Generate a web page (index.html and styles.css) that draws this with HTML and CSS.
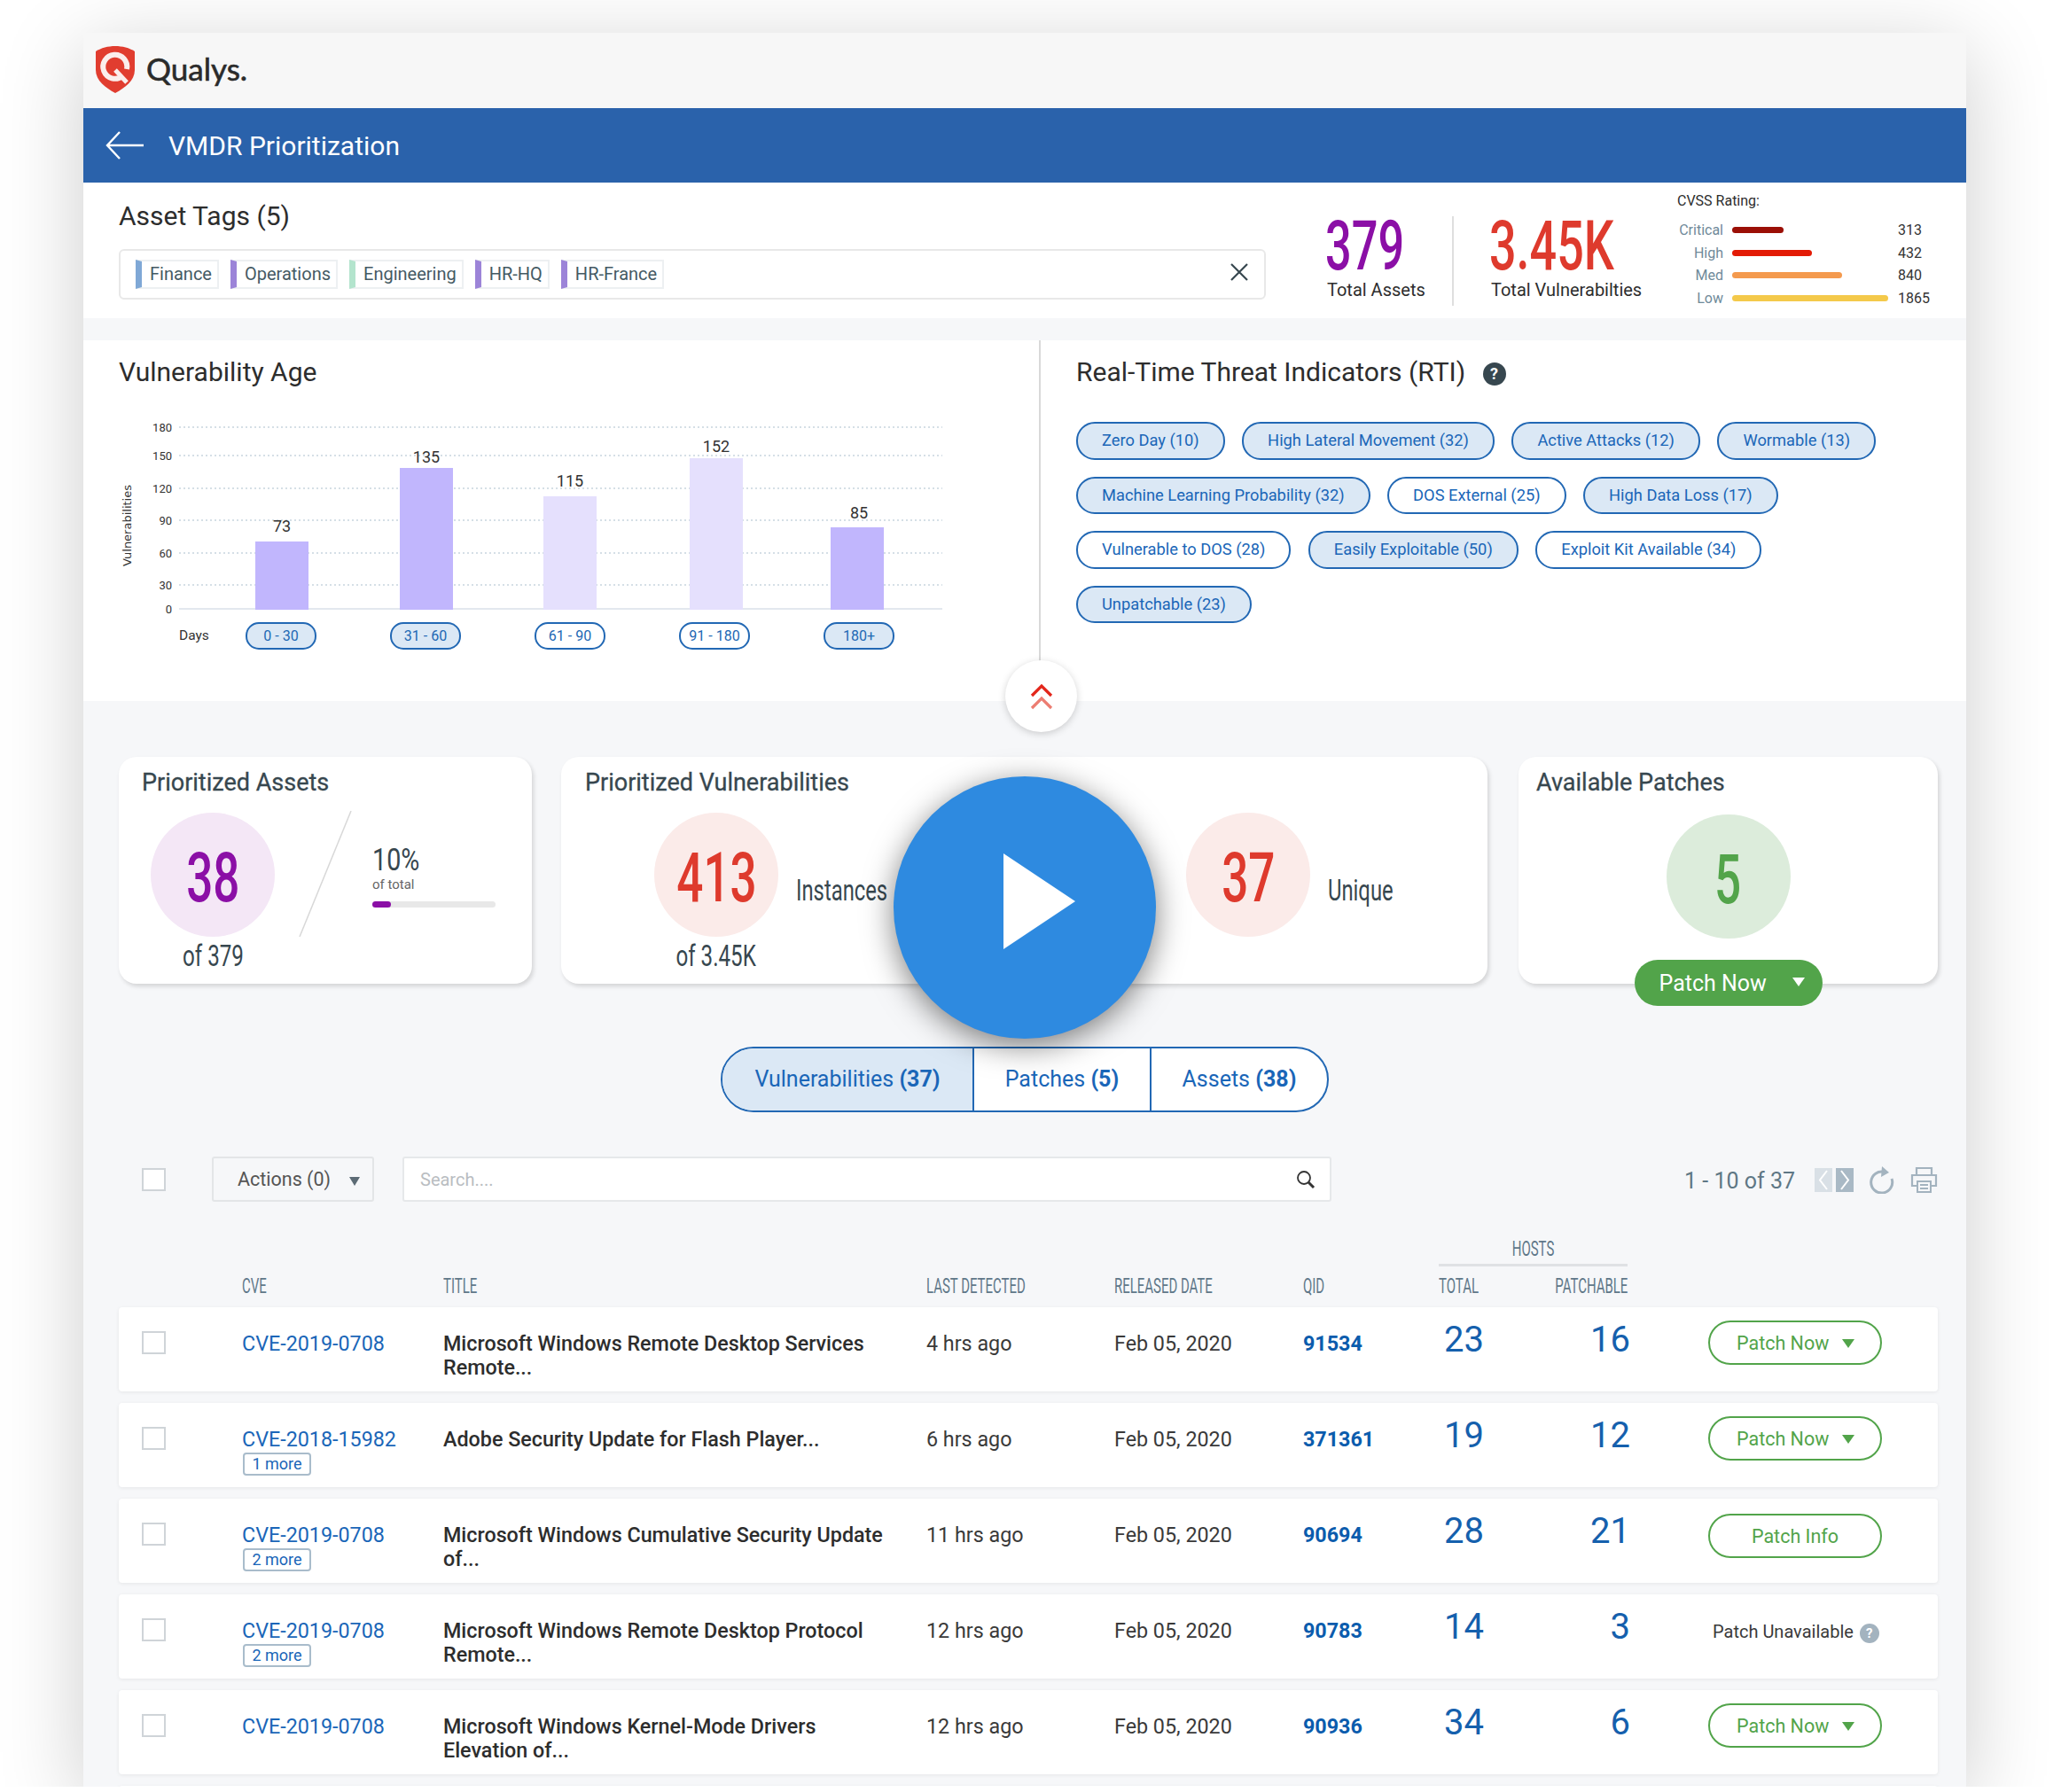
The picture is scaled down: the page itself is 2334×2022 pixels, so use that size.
FILE: index.html
```html
<!DOCTYPE html>
<html lang="en">
<head>
  <meta charset="UTF-8" />
  <title>VMDR Prioritization</title>
  <link rel="stylesheet" href="styles.css">
</head>
<body>
<div class="stage">
<div class="window">

  <div class="logo-bar">
    <svg class="logo" viewBox="0 0 44 53">
      <path d="M22 0C30 0 38 2 44 6V27C44 39 33 47 22 53C11 47 0 39 0 27V6C6 2 14 0 22 0Z" fill="#e13d2f"/>
      <path d="M30 34A13.500 13.500 0 1 1 35 26" fill="none" stroke="#fbeeec" stroke-width="6"/>
      <path d="M22 27L35 41" fill="none" stroke="#fbeeec" stroke-width="5"/>
    </svg>
    <span class="logo-text">Qualys.</span>
  </div>

  <div class="title-bar">
    <svg class="back-arrow" viewBox="0 0 44 32"><path d="M43 16H2M16 1L2 16L16 31" fill="none" stroke="#fff" stroke-width="2.4"/></svg>
    <span>VMDR Prioritization</span>
  </div>

  <section class="summary">
    <div class="tags-block">
      <h2 class="heading">Asset Tags (5)</h2>
      <div class="tag-box">
        <span class="tag tag-blue">Finance</span>
        <span class="tag tag-purple">Operations</span>
        <span class="tag tag-green">Engineering</span>
        <span class="tag tag-purple">HR-HQ</span>
        <span class="tag tag-purple">HR-France</span>
        <svg class="tag-clear" viewBox="0 0 20 20"><path d="M1 1L19 19M19 1L1 19" stroke="#37474f" stroke-width="2.2"/></svg>
      </div>
    </div>
    <div class="total total-assets">
      <div class="total-num purple"><span class="squeeze">379</span></div>
      <div class="total-label">Total Assets</div>
    </div>
    <div class="total total-vulns">
      <div class="total-num red"><span class="squeeze">3.45K</span></div>
      <div class="total-label">Total Vulnerabilties</div>
    </div>
    <div class="cvss">
      <div class="cvss-title">CVSS Rating:</div>
      <div class="cvss-rows">
        <span class="cvss-name">Critical</span><span class="cvss-track"><i class="cvss-bar" style="width:58px;background:#9b0f06"></i></span><span class="cvss-val">313</span>
        <span class="cvss-name">High</span><span class="cvss-track"><i class="cvss-bar" style="width:90px;background:#e31b06"></i></span><span class="cvss-val">432</span>
        <span class="cvss-name">Med</span><span class="cvss-track"><i class="cvss-bar" style="width:124px;background:#f49a4e"></i></span><span class="cvss-val">840</span>
        <span class="cvss-name">Low</span><span class="cvss-track"><i class="cvss-bar" style="width:176px;background:#f4c94a"></i></span><span class="cvss-val">1865</span>
      </div>
    </div>
  </section>

  <section class="insights">
    <div class="age-panel">
      <h2 class="heading">Vulnerability Age</h2>
      <svg class="age-chart" viewBox="94 470 1080 225">
        <g class="grid-lines">
          <path d="M202 482H1063M202 514H1063M202 551H1063M202 587H1063M202 624H1063M202 660H1063"/>
        </g>
        <path d="M202 687H1063" stroke="#e3e8ee" stroke-width="2"/>
        <g class="ticks">
          <text x="194" y="487">180</text><text x="194" y="519">150</text><text x="194" y="556">120</text>
          <text x="194" y="592">90</text><text x="194" y="629">60</text><text x="194" y="665">30</text><text x="194" y="692">0</text>
        </g>
        <text class="axis-title" transform="translate(148 593) rotate(-90)">Vulnerabilities</text>
        <rect x="288" y="611" width="60" height="77" fill="#c1b6fd"/>
        <rect x="451" y="528" width="60" height="160" fill="#c1b6fd"/>
        <rect x="613" y="560" width="60" height="128" fill="#e5e0fd"/>
        <rect x="778" y="517" width="60" height="171" fill="#e5e0fd"/>
        <rect x="937" y="595" width="60" height="93" fill="#c1b6fd"/>
        <g class="bar-labels">
          <text x="318" y="600">73</text><text x="481" y="522">135</text><text x="643" y="549">115</text>
          <text x="808" y="510">152</text><text x="969" y="585">85</text>
        </g>
      </svg>
      <div class="age-pills">
        <span class="days">Days</span>
        <span class="age-pill on">0 - 30</span>
        <span class="age-pill on">31 - 60</span>
        <span class="age-pill">61 - 90</span>
        <span class="age-pill">91 - 180</span>
        <span class="age-pill on">180+</span>
      </div>
    </div>
    <div class="rti-panel">
      <h2 class="heading">Real-Time Threat Indicators (RTI) <span class="help">?</span></h2>
      <div class="chips">
        <div class="chip-row">
          <span class="chip on">Zero Day (10)</span>
          <span class="chip on">High Lateral Movement (32)</span>
          <span class="chip on">Active Attacks (12)</span>
          <span class="chip on">Wormable (13)</span>
        </div>
        <div class="chip-row">
          <span class="chip on">Machine Learning Probability (32)</span>
          <span class="chip">DOS External (25)</span>
          <span class="chip on">High Data Loss (17)</span>
        </div>
        <div class="chip-row">
          <span class="chip">Vulnerable to DOS (28)</span>
          <span class="chip on">Easily Exploitable (50)</span>
          <span class="chip">Exploit Kit Available (34)</span>
        </div>
        <div class="chip-row">
          <span class="chip on">Unpatchable (23)</span>
        </div>
      </div>
    </div>
    <div class="collapse-btn">
      <svg viewBox="0 0 26 30"><path d="M2 14L13 3L24 14" fill="none" stroke="#e3261b" stroke-width="3.2"/><path d="M2 28L13 17L24 28" fill="none" stroke="#ec7d72" stroke-width="3.2"/></svg>
    </div>
  </section>

  <main class="content">
    <div class="stat-cards">
      <div class="card card-assets">
        <h3 class="card-title">Prioritized Assets</h3>
        <div class="card-body">
          <div class="stat-col">
            <div class="circle circle-purple"><span class="squeeze purple">38</span></div>
            <div class="of-label">of 379</div>
          </div>
          <svg class="slash" viewBox="0 0 60 142"><path d="M59 0L1 142" stroke="#d8d8d8" stroke-width="1.5"/></svg>
          <div class="percent">
            <div class="percent-num">10%</div>
            <div class="percent-sub">of total</div>
            <div class="percent-track"><i class="percent-fill"></i></div>
          </div>
        </div>
      </div>
      <div class="card card-vulns">
        <h3 class="card-title">Prioritized Vulnerabilities</h3>
        <div class="card-body">
          <div class="vuln-group vuln-first">
            <div class="stat-col">
              <div class="circle circle-red"><span class="squeeze red">413</span></div>
              <div class="of-label">of 3.45K</div>
            </div>
            <span class="side-label">Instances</span>
          </div>
          <div class="vuln-group">
            <div class="circle circle-red"><span class="squeeze red">37</span></div>
            <span class="side-label">Unique</span>
          </div>
        </div>
      </div>
      <div class="card card-patches">
        <h3 class="card-title">Available Patches</h3>
        <div class="patch-body">
          <div class="circle circle-green"><span class="squeeze green">5</span></div>
          <div class="patch-main">Patch Now <i class="caret caret-white"></i></div>
        </div>
      </div>
    </div>

    <div class="tabs">
      <div class="tab on">Vulnerabilities <b>(37)</b></div>
      <div class="tab">Patches <b>(5)</b></div>
      <div class="tab">Assets <b>(38)</b></div>
    </div>

    <div class="toolbar">
      <span class="check"></span>
      <div class="actions">Actions (0) <i class="caret caret-grey"></i></div>
      <div class="search">
        <span>Search....</span>
        <svg viewBox="0 0 22 22"><circle cx="9" cy="9" r="7" fill="none" stroke="#333" stroke-width="1.8"/><path d="M14 14L20 20" stroke="#333" stroke-width="3"/></svg>
      </div>
      <div class="pager">
        <span class="page-count">1 - 10 of 37</span>
        <svg class="pager-icon" width="44" height="27" viewBox="0 0 44 27">
          <rect width="20" height="27" fill="#d9e0e6"/><rect x="24" width="20" height="27" fill="#a9b9c5"/>
          <path d="M14 3L6 13.500L14 24" fill="none" stroke="#fff" stroke-width="2"/><path d="M30 3L38 13.500L30 24" fill="none" stroke="#fff" stroke-width="2"/>
        </svg>
        <svg class="pager-icon" width="28" height="31" viewBox="0 0 28 31">
          <path d="M17 6.500A12 12 0 1 0 25 14" fill="none" stroke="#a3b3bf" stroke-width="3"/><path d="M14 0L22 7L13 12Z" fill="#a3b3bf"/>
        </svg>
        <svg class="pager-icon" width="31" height="29" viewBox="0 0 31 29">
          <path d="M7 9V1H24V9M7 21H2V9H29V21H24" fill="none" stroke="#a3b3bf" stroke-width="2.2"/><path d="M8 16H23V28H8ZM11 20H20M11 24H20" fill="none" stroke="#a3b3bf" stroke-width="2"/>
        </svg>
      </div>
    </div>

    <div class="table-grid table-hosts">
      <div class="hosts-title"><span class="thin">HOSTS</span></div>
    </div>
    <div class="table-grid table-head">
      <span></span>
      <span><span class="thin">CVE</span></span>
      <span><span class="thin">TITLE</span></span>
      <span><span class="thin">LAST DETECTED</span></span>
      <span><span class="thin">RELEASED DATE</span></span>
      <span><span class="thin">QID</span></span>
      <span><span class="thin">TOTAL</span></span>
      <span class="head-right"><span class="thin">PATCHABLE</span></span>
      <span></span>
    </div>

    <div class="rows">
      <div class="table-grid row">
        <span class="check"></span>
        <div class="cell"><a class="cve">CVE-2019-0708</a></div>
        <div class="cell row-title">Microsoft Windows Remote Desktop Services Remote...</div>
        <div class="cell">4 hrs ago</div>
        <div class="cell">Feb 05, 2020</div>
        <div class="cell qid">91534</div>
        <div class="count">23</div>
        <div class="count count-right">16</div>
        <div class="action"><span class="patch-btn">Patch Now <i class="caret caret-green"></i></span></div>
      </div>
      <div class="table-grid row">
        <span class="check"></span>
        <div class="cell"><a class="cve">CVE-2018-15982</a><span class="more">1 more</span></div>
        <div class="cell row-title">Adobe Security Update for Flash Player...</div>
        <div class="cell">6 hrs ago</div>
        <div class="cell">Feb 05, 2020</div>
        <div class="cell qid">371361</div>
        <div class="count">19</div>
        <div class="count count-right">12</div>
        <div class="action"><span class="patch-btn">Patch Now <i class="caret caret-green"></i></span></div>
      </div>
      <div class="table-grid row">
        <span class="check"></span>
        <div class="cell"><a class="cve">CVE-2019-0708</a><span class="more">2 more</span></div>
        <div class="cell row-title">Microsoft Windows Cumulative Security Update of...</div>
        <div class="cell">11 hrs ago</div>
        <div class="cell">Feb 05, 2020</div>
        <div class="cell qid">90694</div>
        <div class="count">28</div>
        <div class="count count-right">21</div>
        <div class="action"><span class="patch-btn patch-info">Patch Info</span></div>
      </div>
      <div class="table-grid row">
        <span class="check"></span>
        <div class="cell"><a class="cve">CVE-2019-0708</a><span class="more">2 more</span></div>
        <div class="cell row-title">Microsoft Windows Remote Desktop Protocol Remote...</div>
        <div class="cell">12 hrs ago</div>
        <div class="cell">Feb 05, 2020</div>
        <div class="cell qid">90783</div>
        <div class="count">14</div>
        <div class="count count-right">3</div>
        <div class="action"><span class="unavailable">Patch Unavailable <span class="help help-grey">?</span></span></div>
      </div>
      <div class="table-grid row">
        <span class="check"></span>
        <div class="cell"><a class="cve">CVE-2019-0708</a></div>
        <div class="cell row-title">Microsoft Windows Kernel-Mode Drivers Elevation of...</div>
        <div class="cell">12 hrs ago</div>
        <div class="cell">Feb 05, 2020</div>
        <div class="cell qid">90936</div>
        <div class="count">34</div>
        <div class="count count-right">6</div>
        <div class="action"><span class="patch-btn">Patch Now <i class="caret caret-green"></i></span></div>
      </div>
      <div class="table-grid row"></div>
    </div>
  </main>

  <div class="play">
    <svg viewBox="0 0 81 108"><path d="M0 0L81 54L0 108Z" fill="#fff"/></svg>
  </div>
</div>
</div>
</body>
</html>
```
FILE: styles.css
```css
* { box-sizing: border-box; }

body {
  margin: 0;
  background: #fff;
  font-family: Roboto, sans-serif;
  color: #2d2d2d;
}

.stage {
  height: 2016px;
  overflow: hidden;
  padding: 37px 116px 0 94px;
}

.window {
  position: relative;
  height: 1979px;
  background: #f6f7f9;
  box-shadow: 0 20px 90px rgba(0,0,0,0.2);
}

.purple { color: #8b0fa6; }
.red { color: #de3a2d; }
.green { color: #52a44a; }

.squeeze {
  display: inline-block;
  font-size: 78px;
  font-weight: 500;
  line-height: 64px;
  transform: scaleX(0.68);
}

.circle .squeeze { margin-top: 8px; }

.thin {
  display: inline-block;
  white-space: nowrap;
  transform: scaleX(0.65);
  transform-origin: left center;
}

.logo-bar {
  height: 85px;
  background: #f7f7f7;
  display: flex;
  align-items: center;
  padding: 0 0 3px 14px;
}

.logo { width: 44px; height: 53px; }

.logo-text {
  margin: -2px 0 0 13px;
  font-family: Lato, sans-serif;
  font-size: 35px;
  font-weight: 400;
  -webkit-text-stroke: 0.6px #2b2b2b;
  color: #2b2b2b;
}

.title-bar {
  height: 84px;
  background: #2a62ab;
  color: #fff;
  font-size: 30px;
  display: flex;
  align-items: center;
  padding-left: 25px;
}

.back-arrow { width: 44px; height: 32px; margin-right: 27px; }

.heading {
  margin: 0;
  font-size: 30px;
  font-weight: 400;
  line-height: 36px;
  color: #2d2d2d;
}

.summary {
  height: 153px;
  background: #fff;
  display: flex;
  padding-left: 40px;
}

.tags-block { width: 1294px; padding-top: 20px; }

.tag-box {
  margin-top: 19px;
  height: 57px;
  border: 2px solid #e8e8e8;
  border-radius: 6px;
  padding: 10px 17px;
  display: flex;
  gap: 13px;
}

.tag {
  height: 33px;
  border: 2px solid #edf0f2;
  border-left: 7px solid #7fa8d6;
  padding: 0 6px 0 9px;
  font-size: 20px;
  line-height: 29px;
  color: #455a64;
}

.tag-blue { border-left-color: #7fa8d6; }
.tag-purple { border-left-color: #9c84d8; }
.tag-green { border-left-color: #b3e4cd; }

.tag-clear { width: 20px; height: 20px; margin: 4px 1px 0 auto; }

.total { margin-top: 38px; height: 101px; }

.total-assets { margin-left: 67px; width: 145px; border-right: 2px solid #dfdfdf; }
.total-vulns { width: 252px; padding-left: 40px; }

.total-num { line-height: 64px; height: 66px; padding-top: 2px; }
.total-num .squeeze { transform-origin: left center; transform: scaleX(0.67); }
.total-vulns .squeeze { transform: scaleX(0.69); }

.total-label { font-size: 20px; line-height: 26px; margin-top: 4px; margin-left: 2px; white-space: nowrap; }

.cvss { padding-top: 11px; }

.cvss-title { font-size: 16px; line-height: 20px; margin-bottom: 10px; color: #2d2d2d; }

.cvss-rows {
  display: grid;
  grid-template-columns: 52px 176px auto;
  column-gap: 10px;
  grid-auto-rows: 25.5px;
  align-items: center;
  font-size: 16px;
}

.cvss-name { text-align: right; color: #6f8a9a; }
.cvss-track { display: block; }
.cvss-bar { display: block; height: 7px; border-radius: 4px; }
.cvss-val { color: #333; margin-left: 1px; }

.insights {
  position: relative;
  height: 407px;
  margin-top: 25px;
  background: #fff;
  display: grid;
  grid-template-columns: 1080px 1fr;
}

.age-panel { padding: 18px 0 0 40px; border-right: 2px solid #d9d9d9; }

.age-chart {
  display: block;
  width: 1080px;
  height: 225px;
  margin: 32px 0 0 -40px;
}

.grid-lines path { stroke: #d5dfe6; stroke-width: 2; stroke-dasharray: 2 3; fill: none; }

.ticks text {
  font-family: Roboto, sans-serif;
  font-size: 13px;
  text-anchor: end;
  fill: #333;
}

.axis-title {
  font-family: "DejaVu Sans", sans-serif;
  font-size: 13px;
  fill: #333;
  text-anchor: middle;
}

.bar-labels text {
  font-family: Roboto, sans-serif;
  font-size: 18px;
  text-anchor: middle;
  fill: #333;
}

.age-pills {
  display: flex;
  gap: 83px;
  margin-top: 7px;
  padding-left: 68px;
}

.days { width: 0; margin-right: -8px; font-size: 15.5px; line-height: 31px; color: #333; white-space: nowrap; }

.age-pill {
  width: 80px;
  height: 31px;
  border: 2px solid #2268b4;
  border-radius: 15px;
  background: #fff;
  color: #2268b4;
  font-size: 16px;
  line-height: 27px;
  text-align: center;
}

.age-pill.on { background: #dbe8f5; }

.rti-panel { padding: 18px 0 0 40px; }

.help {
  display: inline-block;
  vertical-align: 2px;
  width: 26px;
  height: 26px;
  margin-left: 12px;
  border-radius: 50%;
  background: #37474f;
  color: #fff;
  font-size: 18px;
  font-weight: 700;
  line-height: 26px;
  text-align: center;
}

.chips {
  display: flex;
  flex-direction: column;
  gap: 19px;
  margin-top: 38px;
}

.chip-row { display: flex; gap: 19.5px; }

.chip {
  height: 42.500px;
  padding: 0 27px;
  border: 2px solid #2268b4;
  border-radius: 21px;
  background: #fff;
  color: #1a66b8;
  font-size: 18.3px;
  line-height: 38px;
  white-space: nowrap;
}

.chip.on { background: #dbe8f5; }

.collapse-btn {
  position: absolute;
  left: 1040px;
  bottom: -35px;
  width: 81px;
  height: 81px;
  border-radius: 50%;
  background: #fff;
  box-shadow: 0 2px 8px rgba(0,0,0,0.18);
  display: flex;
  align-items: center;
  justify-content: center;
}

.collapse-btn svg { width: 26px; height: 30px; }

.content { padding: 63px 32px 0 40px; }

.stat-cards { display: flex; height: 256px; }

.card {
  height: 256px;
  background: #fff;
  border-radius: 20px;
  box-shadow: 2px 3px 5px rgba(0,0,0,0.14);
  padding-top: 13px;
}

.card-assets { width: 466px; padding-left: 26px; }
.card-vulns { width: 1045px; margin-left: 33px; padding-left: 27px; }
.card-patches { width: 473px; margin-left: 35px; padding-left: 20px; }

.card-title {
  margin: 0;
  font-size: 27px;
  font-weight: 400;
  -webkit-text-stroke: 0.3px #37474f;
  line-height: 32px;
  color: #37474f;
}

.card-body { display: flex; margin-top: 18px; }

.stat-col { display: flex; flex-direction: column; align-items: center; width: 140px; }

.card-assets .stat-col { margin-left: 10px; }

.circle {
  width: 140px;
  height: 140px;
  border-radius: 50%;
  display: flex;
  align-items: center;
  justify-content: center;
  flex-shrink: 0;
}

.circle-purple { background: #f4e7f6; }
.circle-red { background: #fbebe9; }
.circle-green { background: #dcecdb; }

.of-label,
.side-label,
.percent-num {
  color: #37474f;
  white-space: nowrap;
}

.of-label { font-size: 34px; line-height: 40px; margin-top: 1px; transform: scaleX(0.71); }

.slash { width: 60px; height: 142px; margin: -2px 23px 0 27px; }

.percent { padding-top: 36px; }
.percent-num { font-size: 35px; line-height: 36px; transform: scaleX(0.82); transform-origin: left center; }
.percent-sub { font-size: 15px; line-height: 20px; margin-top: -1px; color: #666; }

.percent-track {
  width: 139px;
  height: 7px;
  margin-top: 9px;
  border-radius: 4px;
  background: #e8e8e8;
}

.percent-fill { display: block; width: 21px; height: 7px; border-radius: 4px; background: #8b0fa6; }

.vuln-group { display: flex; gap: 20px; }
.vuln-first { width: 600px; margin-left: 78px; }

.side-label {
  font-size: 34px;
  line-height: 40px;
  padding-top: 67px;
  transform: scaleX(0.7);
  transform-origin: left center;
}

.patch-body { display: flex; flex-direction: column; align-items: center; margin: 20px 0 0 -20px; }

.patch-main {
  width: 212px;
  height: 52px;
  margin-top: 24px;
  padding-left: 28px;
  border-radius: 26px;
  background: #52a44a;
  color: #fff;
  font-size: 25px;
  line-height: 54px;
}

.caret {
  display: inline-block;
  width: 0;
  height: 0;
  border-left: 7px solid transparent;
  border-right: 7px solid transparent;
  border-top: 10px solid;
}

.caret-white { color: #fff; margin-left: 23px; vertical-align: 5px; }
.caret-green { color: #52a44a; margin-left: 9px; vertical-align: 2px; }
.caret-grey { color: #5c6b75; margin-left: 16px; border-left-width: 6px; border-right-width: 6px; vertical-align: 0; }

.tabs {
  display: grid;
  grid-template-columns: 282px 200px 200px;
  width: 686px;
  height: 74px;
  margin: 71px 0 0 679px;
  border: 2px solid #2268b4;
  border-radius: 37px;
  overflow: hidden;
  background: #fff;
}

.tab {
  font-size: 25px;
  line-height: 70px;
  text-align: center;
  color: #1a66b8;
  border-left: 2px solid #2268b4;
}

.tab:first-child { border-left: 0; }
.tab b { font-weight: 700; }
.tab.on { background: #dbe8f5; }

.toolbar {
  display: flex;
  align-items: center;
  height: 51px;
  margin-top: 50px;
  padding-left: 26px;
}

.check {
  width: 27px;
  height: 26px;
  border: 2px solid #cfd4d8;
  background: #fff;
  flex-shrink: 0;
}

.actions {
  width: 183px;
  height: 51px;
  margin-left: 52px;
  padding-left: 27px;
  border: 2px solid #e3e5e7;
  border-radius: 3px;
  color: #555;
  font-size: 21.5px;
  line-height: 47px;
  white-space: nowrap;
}

.search {
  width: 1048px;
  height: 51px;
  margin-left: 32px;
  padding: 0 16px 0 18px;
  border: 2px solid #e6e8ea;
  border-radius: 3px;
  background: #fff;
  color: #b9bdc1;
  font-size: 20px;
  display: flex;
  align-items: center;
  justify-content: space-between;
}

.search svg { width: 22px; height: 22px; }

.pager { margin-left: auto; display: flex; align-items: center; }
.page-count { font-size: 25px; color: #5f7785; margin-right: 22px; padding-top: 4px; white-space: nowrap; }
.pager-icon { margin-right: 18px; margin-top: 2px; }
.pager-icon:last-child { margin-right: 0; }

.table-grid {
  display: grid;
  grid-template-columns: 139px 227px 545px 212px 213px 153px 107px 106px 350px;
}

.table-hosts { margin-top: 40px; }

.hosts-title {
  grid-column: 7 / span 2;
  height: 33px;
  border-bottom: 3px solid #dfe1e4;
  text-align: center;
  font-size: 23px;
  line-height: 28px;
  color: #607889;
}

.hosts-title .thin { transform-origin: center; }

.table-head {
  height: 36px;
  padding-top: 10px;
  font-size: 23px;
  line-height: 26px;
  color: #607889;
}

.head-right { display: flex; justify-content: flex-end; }
.head-right .thin { transform-origin: right center; }

.rows { display: flex; flex-direction: column; gap: 13px; margin-top: 10px; }

.row {
  height: 95px;
  flex-shrink: 0;
  padding-top: 14px;
  background: #fff;
  border-radius: 4px;
  box-shadow: 0 1px 4px rgba(0,0,0,0.07);
  font-size: 23.3px;
  line-height: 27px;
  color: #3a3a3a;
}

.row .check { margin: 13px 0 0 26px; }

.cell { padding-top: 14px; }

.cve { display: block; color: #1a66b8; }

.more {
  display: block;
  width: 77px;
  height: 26px;
  margin: 1px 0 0 1px;
  border: 2px solid #a9bccb;
  border-radius: 4px;
  color: #1a66b8;
  font-size: 18px;
  line-height: 22px;
  text-align: center;
}

.row-title { padding-right: 30px; font-weight: 500; color: #2d2d2d; }

.qid { font-weight: 700; color: #0b5cad; }

.count { font-size: 40px; line-height: 42px; padding-top: 2px; color: #1560ad; padding-left: 6px; }
.count-right { text-align: right; padding-left: 0; margin-right: -3px; }

.action { padding-left: 91px; padding-top: 1px; }

.patch-btn {
  display: block;
  width: 196px;
  height: 50px;
  border: 2px solid #52a44a;
  border-radius: 25px;
  color: #52a44a;
  font-size: 21.5px;
  line-height: 48px;
  padding-left: 30px;
  white-space: nowrap;
}

.patch-info { margin-top: 2px; padding-left: 0; text-align: center; }

.unavailable {
  display: block;
  padding-top: 14px;
  margin-left: 5px;
  font-size: 20px;
  color: #3a3a3a;
  white-space: nowrap;
}

.help-grey {
  width: 22px;
  height: 22px;
  margin-left: 2px;
  background: #a3b3bf;
  font-size: 15px;
  line-height: 22px;
  vertical-align: 0;
}

.play {
  position: absolute;
  left: 914px;
  top: 839px;
  width: 296px;
  height: 296px;
  border-radius: 50%;
  background: #2e8ae0;
  box-shadow: 0 8px 34px rgba(0,0,0,0.5);
  display: flex;
  align-items: center;
  padding-left: 124px;
}

.play svg { width: 81px; height: 108px; margin-top: -14px; }
```
